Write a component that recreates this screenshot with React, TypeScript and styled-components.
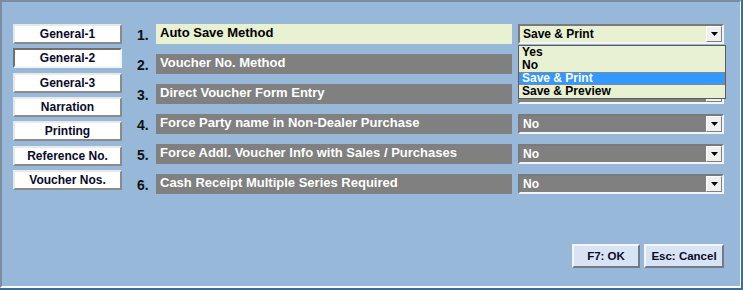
import styled, { createGlobalStyle } from 'styled-components';

const GlobalStyle = createGlobalStyle`
  html, body {
    margin: 0;
    padding: 0;
    background: #97b8d9;
  }
  * {
    box-sizing: border-box;
  }
`;

interface Setting {
  label: string;
  value: string;
  active?: boolean;
}

const tabs = ['General-1', 'General-2', 'General-3', 'Narration', 'Printing', 'Reference No.', 'Voucher Nos.'];

// rows 2 and 3 sit under the open list, so their values are not shown
const settings: Setting[] = [
  { label: 'Auto Save Method', value: 'Save & Print', active: true },
  { label: 'Voucher No. Method', value: '' },
  { label: 'Direct Voucher Form Entry', value: '' },
  { label: 'Force Party name in Non-Dealer Purchase', value: 'No' },
  { label: 'Force Addl. Voucher Info with Sales / Purchases', value: 'No' },
  { label: 'Cash Receipt Multiple Series Required', value: 'No' },
];

const options = ['Yes', 'No', 'Save & Print', 'Save & Preview'];

const App = () => {
  return (
    <>
      <GlobalStyle />
      <Window>
        <Inner>
          <Body>
            <TabList>
              {tabs.map((t, idx) => (
                <TabButton key={t} pressed={idx === 1}>
                  {t}
                </TabButton>
              ))}
            </TabList>

            <SettingsGrid>
              {settings.map((s, idx) => (
                <Row key={s.label}>
                  <Num>{idx + 1}.</Num>
                  <Label active={s.active}>{s.label}</Label>
                  <Combo active={s.active}>
                    <ComboValue active={s.active}>{s.value}</ComboValue>
                    <ArrowBtn>
                      <svg width='7' height='4' viewBox='0 0 7 4'>
                        <path d='M0 0H7L3.5 4Z' fill='#000' />
                      </svg>
                    </ArrowBtn>
                    {s.active && (
                      <DropList>
                        {options.map((o) => (
                          <DropItem key={o} selected={o === s.value}>
                            {o}
                          </DropItem>
                        ))}
                      </DropList>
                    )}
                  </Combo>
                </Row>
              ))}
            </SettingsGrid>
          </Body>

          <Footer>
            <ActionButton width={68}>F7: OK</ActionButton>
            <ActionButton width={80}>Esc: Cancel</ActionButton>
          </Footer>
        </Inner>
      </Window>
    </>
  );
};

const Window = styled.div`
  width: 743px;
  height: 290px;
  border-right: 2px solid #3c6d96;
  border-bottom: 2px solid #3c6d96;
  font-family: 'Liberation Sans', Arial, sans-serif;
`;

const Inner = styled.div`
  height: 100%;
  display: flex;
  flex-direction: column;
  background: #97b8d9;
  border-top: 2px solid #7c8c9c;
  border-left: 2px solid #7c8c9c;
  border-right: 1px solid #fff;
  border-bottom: 2px solid #fff;
  padding: 22px 16px 18px 11px;
`;

const Body = styled.div`
  display: flex;
  gap: 15px;
`;

const TabList = styled.div`
  display: flex;
  flex-direction: column;
  gap: 4.33px;
  width: 110px;
`;

const TabButton = styled.div<{ pressed?: boolean }>`
  height: 20px;
  background: #fff;
  border: 2px solid;
  border-color: ${(p) => (p.pressed ? '#707070 #f4f4f4 #f4f4f4 #707070' : '#e8e8e8 #8a8a8a #8a8a8a #e8e8e8')};
  color: #0a0a2a;
  font-size: 12px;
  font-weight: bold;
  line-height: 16px;
  text-align: center;
`;

const SettingsGrid = styled.div`
  display: flex;
  flex-direction: column;
  gap: 10px;
`;

const Row = styled.div`
  display: flex;
  align-items: center;
  height: 20px;
`;

const Num = styled.div`
  width: 19px;
  font-size: 14px;
  font-weight: bold;
  color: #111;
  padding-top: 1px;
`;

const Label = styled.div<{ active?: boolean }>`
  width: 356px;
  height: 20px;
  padding: 1px 4px 0;
  background: ${(p) => (p.active ? '#e8f1d1' : '#808080')};
  color: ${(p) => (p.active ? '#000' : '#fff')};
  font-size: 13px;
  font-weight: bold;
  line-height: 16px;
  white-space: nowrap;
`;

const Combo = styled.div<{ active?: boolean }>`
  position: relative;
  margin-left: 6px;
  width: 206px;
  height: 20px;
  display: flex;
  align-items: center;
  background: ${(p) => (p.active ? '#e8f1d1' : '#808080')};
  border: 2px solid;
  border-color: #7a7a7a #f4f4f4 #f4f4f4 #7a7a7a;
`;

const ComboValue = styled.div<{ active?: boolean }>`
  flex: 1;
  padding-left: 3px;
  font-size: 12px;
  font-weight: bold;
  color: ${(p) => (p.active ? '#000' : '#fff')};
`;

const ArrowBtn = styled.div`
  width: 16px;
  height: 16px;
  display: flex;
  align-items: center;
  justify-content: center;
  background: #f0f0f0;
  border: 1px solid;
  border-color: #fff #808080 #808080 #fff;
`;

const DropList = styled.div`
  position: absolute;
  top: 19px;
  left: -2px;
  width: 208px;
  border: 1px solid #5c5c5c;
  background: #e8f1d1;
  z-index: 2;
`;

const DropItem = styled.div<{ selected?: boolean }>`
  height: 13px;
  padding-left: 3px;
  font-size: 12px;
  font-weight: bold;
  line-height: 13px;
  color: ${(p) => (p.selected ? '#fff' : '#000')};
  background: ${(p) => (p.selected ? '#3399ff' : 'transparent')};
  outline: ${(p) => (p.selected ? '1px dotted #c87a3a' : 'none')};
  outline-offset: -1px;
`;

const Footer = styled.div`
  margin-top: auto;
  display: flex;
  justify-content: flex-end;
  gap: 4px;
`;

const ActionButton = styled.div<{ width: number }>`
  width: ${(p) => p.width}px;
  height: 24px;
  background: #d8e3f3;
  border: 2px solid;
  border-color: #f4f6fa #707c88 #707c88 #f4f6fa;
  color: #0a0a2a;
  font-size: 11.5px;
  font-weight: bold;
  line-height: 20px;
  text-align: center;
`;

export default App;
